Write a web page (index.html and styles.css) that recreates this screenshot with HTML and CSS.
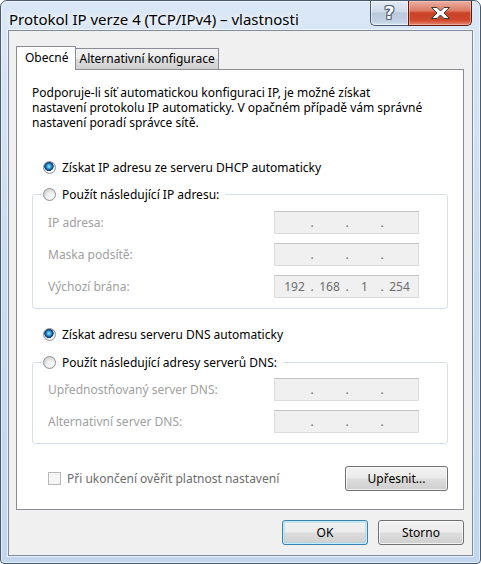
FILE: index.html
```html
<!DOCTYPE html>
<html>

<head>
<meta charset="utf-8">
<link rel="stylesheet" href="styles.css">
</head>

<body>
<div class="window">

<div class="titlebar">
<div class="title">Protokol IP verze 4 (TCP/IPv4) – vlastnosti</div>
<div class="capbtn help"><span>?</span></div>
<div class="capbtn close">
<svg width="21" height="14" viewBox="0 0 21 14">
<polygon points="1.5,1.5 7,1.5 10.5,5 14,1.5 19.5,1.5 14,7 19.5,12.5 14,12.5 10.5,9 7,12.5 1.5,12.5 7,7" fill="#fff" stroke="#3a3a3a" stroke-width="1" stroke-linejoin="round"/>
</svg>
</div>
</div>

<div class="client">

<div class="tabs">
<div class="tab active">Obecné</div>
<div class="tab">Alternativní konfigurace</div>
</div>

<div class="panel">

<p class="intro">Podporuje-li síť automatickou konfiguraci IP, je možné získat
nastavení protokolu IP automaticky. V opačném případě vám správné
nastavení poradí správce sítě.</p>

<label class="radio first">
<input type="radio" name="ip" checked>
<span>Získat IP adresu ze serveru DHCP automaticky</span>
</label>

<fieldset class="group ipgroup">
<legend>
<label class="radio">
<input type="radio" name="ip">
<span>Použít následující IP adresu:</span>
</label>
</legend>
<div class="row">
<span class="lbl">IP adresa:</span>
<div class="ipfield"><span></span><i>.</i><span></span><i>.</i><span></span><i>.</i><span></span></div>
</div>
<div class="row">
<span class="lbl">Maska podsítě:</span>
<div class="ipfield"><span></span><i>.</i><span></span><i>.</i><span></span><i>.</i><span></span></div>
</div>
<div class="row">
<span class="lbl">Výchozí brána:</span>
<div class="ipfield"><span>192</span><i>.</i><span>168</span><i>.</i><span>1</span><i>.</i><span>254</span></div>
</div>
</fieldset>

<label class="radio dnsauto">
<input type="radio" name="dns" checked>
<span>Získat adresu serveru DNS automaticky</span>
</label>

<fieldset class="group dnsgroup">
<legend>
<label class="radio">
<input type="radio" name="dns">
<span>Použít následující adresy serverů DNS:</span>
</label>
</legend>
<div class="row">
<span class="lbl">Upřednostňovaný server DNS:</span>
<div class="ipfield"><span></span><i>.</i><span></span><i>.</i><span></span><i>.</i><span></span></div>
</div>
<div class="row">
<span class="lbl">Alternativní server DNS:</span>
<div class="ipfield"><span></span><i>.</i><span></span><i>.</i><span></span><i>.</i><span></span></div>
</div>
</fieldset>

<div class="bottom">
<label class="check">
<input type="checkbox" disabled>
<span>Při ukončení ověřit platnost nastavení</span>
</label>
<button class="btn advanced">Upřesnit...</button>
</div>

</div>

<div class="actions">
<button class="btn default">OK</button>
<button class="btn">Storno</button>
</div>

</div>

</div>
</body>
</html>
```

FILE: styles.css
```css
body {
    margin: 0;
    font-family: 'Noto Sans', 'Open Sans', sans-serif;
    font-size: 12px;
    color: #000;
}

.window {
    width: 481px;
    height: 564px;
    box-sizing: border-box;
    display: flex;
    flex-direction: column;
    padding: 0 7px 7px 7px;

    border: 1px solid #4a5a6e;
    border-radius: 7px 7px 4px 4px;
    box-shadow: inset 0 0 0 1px rgba(255, 255, 255, .55);
    background: linear-gradient(180deg, #dae7f6 0%, #cadcf1 45%, #c2d7ee 100%);
}

/* title bar */

.titlebar {
    height: 29px;
    display: flex;
    align-items: flex-start;
}

.title {
    flex: 1;
    padding-left: 1px;
    margin-top: 8px;
    font-size: 15px;
    line-height: 20px;
    text-shadow: 0 0 6px #fff, 0 0 10px #fff;
}

.capbtn {
    height: 24px;
    display: flex;
    align-items: center;
    justify-content: center;
    border: 1px solid #4b5a70;
    border-top: none;
}

.help {
    width: 37px;
    border-right: none;
    border-radius: 0 0 0 5px;
    background: linear-gradient(180deg, #e3ebf5 0%, #cfdbe9 45%, #b9c9dc 50%, #c2d1e3 85%, #d6e2ef 100%);
    box-shadow: inset 0 0 0 1px rgba(255, 255, 255, .5);
}

.help span {
    font-family: 'DejaVu Sans', sans-serif;
    font-weight: bold;
    font-size: 17px;
    line-height: 20px;
    color: #fff;
    text-shadow: 1px 0 0 #56657a, -1px 0 0 #56657a, 0 1px 0 #56657a, 0 -1px 0 #56657a,
                 1px 1px 0 #56657a, -1px -1px 0 #56657a, 1px -1px 0 #56657a, -1px 1px 0 #56657a;
}

.close {
    width: 62px;
    margin-right: 1px;
    border-color: #5f1d12;
    border-radius: 0 0 5px 0;
    background: linear-gradient(180deg, #eab0a3 0%, #de7c66 40%, #c94227 50%, #d0482b 80%, #e4896f 100%);
    box-shadow: inset 0 0 0 1px rgba(255, 210, 200, .45);
}

/* client area */

.client {
    flex: 1;
    display: flex;
    flex-direction: column;
    padding: 15px 8px 10px 7px;
    background: #f0f0f0;
    border: 1px solid #7d8b9b;
    box-shadow: 0 0 0 1px rgba(255, 255, 255, .6);
}

.tabs {
    display: flex;
    align-items: flex-end;
    height: 24px;
    margin-bottom: -1px;
    position: relative;
    z-index: 1;
}

.tab {
    height: 20px;
    line-height: 20px;
    padding: 0 3px;
    margin-left: -1px;
    margin-bottom: 1px;
    border: 1px solid #898c95;
    border-bottom: none;
    background: linear-gradient(180deg, #f2f2f2 0%, #ebebeb 50%, #dddddd 51%, #cfcfcf 100%);
}

.tab.active {
    height: 23px;
    line-height: 22px;
    padding: 0 7px 0 8px;
    margin-left: 0;
    margin-bottom: 0;
    background: #fff;
}

.panel {
    flex: 1;
    background: #fff;
    border: 1px solid #898c95;
    padding: 15px 15px 0 15px;
    display: flex;
    flex-direction: column;
}

.intro {
    margin: 0;
    line-height: 15px;
    white-space: pre-line;
}

.radio, .check {
    display: flex;
    align-items: center;
    gap: 6px;
    line-height: 15px;
}

.radio.first {
    margin-top: 30px;
    margin-left: 11px;
}

.radio input {
    appearance: none;
    margin: 0;
    width: 13px;
    height: 13px;
    border-radius: 50%;
    border: 1px solid #8d9298;
    box-sizing: border-box;
    background: radial-gradient(circle at 65% 70%, #ffffff 0%, #f1f1f1 35%, #d4d4d4 75%, #c4c4c4 100%);
}

.radio input:checked {
    background:
        radial-gradient(circle at 45% 40%, #b4ecff 0%, #4aaeea 18%, #1a6fb4 34%, #0b3e6d 46%, #0b3e6d 50%, transparent 54%),
        radial-gradient(circle at 65% 70%, #ffffff 0%, #f1f1f1 35%, #d4d4d4 75%, #c4c4c4 100%);
}

/* group boxes */

.group {
    margin: 0;
    padding: 0 29px 10px 10px;
    border: 1px solid #d5dfe5;
    border-radius: 3px;
}

.group legend {
    padding: 0 6px 0 0;
}

.ipgroup {
    margin-top: 12px;
}

.dnsgroup {
    margin-top: 13px;
}

.dnsauto {
    margin-top: 18px;
    margin-left: 11px;
}

.row {
    display: flex;
    align-items: center;
    justify-content: space-between;
    padding-left: 5px;
    margin-top: 9px;
}

.ipgroup .row:first-of-type {
    margin-top: 9px;
}

.dnsgroup .row:first-of-type {
    margin-top: 8px;
}

.lbl {
    color: #a0a0a0;
}

.ipfield {
    width: 145px;
    height: 23px;
    box-sizing: border-box;
    display: flex;
    align-items: center;
    padding-left: 4px;
    margin-right: -1px;
    background: #f0f0f0;
    border: 1px solid #dcdcdc;
    border-top-color: #c3c3c3;
    color: #6d6d6d;
}

.ipfield span {
    width: 31px;
    text-align: center;
}

.ipfield i {
    width: 4px;
    font-style: normal;
    text-align: center;
}

/* bottom row */

.bottom {
    display: flex;
    align-items: center;
    justify-content: space-between;
    margin-top: 22px;
    padding-left: 16px;
}

.check {
    color: #6d6d6d;
}

.check input {
    appearance: none;
    margin: 0;
    width: 13px;
    height: 13px;
    box-sizing: border-box;
    border: 1px solid #b8b8b8;
    background: #f5f5f5;
}

.btn {
    height: 25px;
    padding: 0;
    font-family: 'Noto Sans', 'Open Sans', sans-serif;
    font-size: 12px;
    color: #000;
    border: 1px solid #707070;
    border-radius: 3px;
    background: linear-gradient(180deg, #f2f2f2 0%, #ebebeb 48%, #dddddd 52%, #cfcfcf 100%);
    box-shadow: inset 0 0 0 1px rgba(255, 255, 255, .7);
}

.advanced {
    width: 103px;
}

.actions {
    display: flex;
    justify-content: flex-end;
    gap: 10px;
    margin-top: 10px;
}

.actions .btn {
    width: 86px;
}

.btn.default {
    border-color: #3c7fb1;
    box-shadow: inset 0 0 0 1px #c4ecff, inset 0 0 0 2px rgba(150, 215, 245, .5);
}
```
